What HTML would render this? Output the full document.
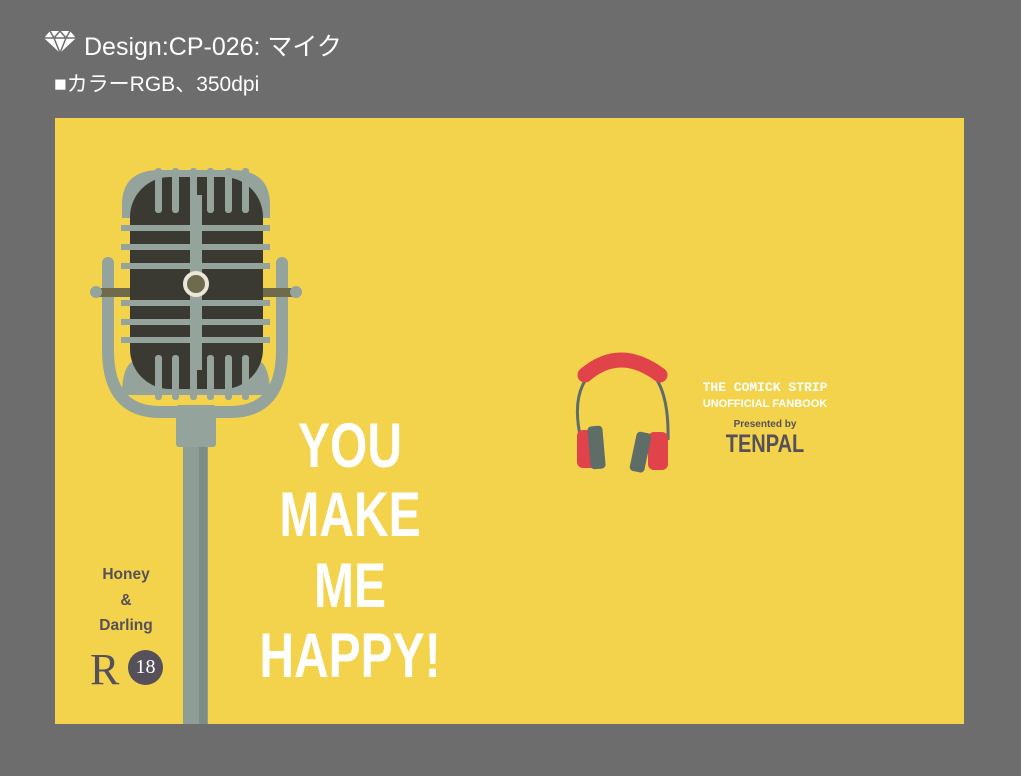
<!DOCTYPE html>
<html><head><meta charset="utf-8"><style>
body{margin:0;width:1021px;height:776px;background:#6d6d6d;position:relative;overflow:hidden;font-family:"Liberation Sans","Noto Sans CJK JP",sans-serif}
.t1{position:absolute;left:84px;top:27px;color:#fff;font-size:25px}
.t2{position:absolute;left:54px;top:68px;color:#fff;font-size:21px}
.panel{position:absolute;left:55px;top:118px;width:909px;height:606px;background:#f3d24c}
.big{position:absolute;color:#fff;font-weight:bold;text-align:center;width:300px;left:200px;font-size:60px;transform:scale(0.8,1.05);line-height:70px}
.hd{position:absolute;color:#55505a;font-weight:bold;font-size:15.5px;text-align:center;width:100px;left:76px}
</style></head><body>
<svg style="position:absolute;left:43px;top:30px" width="34" height="24" viewBox="0 0 34 24"><path d="M7 1H27L33 8L17 23L1 8Z" fill="#fff"/><path d="M1 8H33M7 1L11 8L17 23M27 1L23 8L17 23M11 8L17 1L23 8" stroke="#6d6d6d" stroke-width="1.5" fill="none"/></svg>
<div class="t1">Design:CP-026: マイク</div>
<div class="t2">■カラーRGB、350dpi</div>
<div class="panel"></div>
<svg style="position:absolute;left:0;top:0" width="1021" height="776">
<rect x="183" y="440" width="25" height="284" fill="#8e9d95"/>
<rect x="199" y="440" width="8" height="284" fill="#7d8c85"/>
<path d="M108 263V350Q108 412 160 412H230Q282 412 282 350V263" stroke="#94a39b" stroke-width="12" fill="none" stroke-linecap="round"/>
<rect x="176" y="405" width="40" height="42" rx="3" fill="#94a39b"/>
<rect x="96" y="288" width="200" height="9" fill="#6f6a4c"/>
<circle cx="96" cy="292" r="6" fill="#94a39b"/><circle cx="296" cy="292" r="6" fill="#94a39b"/>
<path d="M122 205Q122 170 160 170H232Q270 170 270 205V218H122Z" fill="#94a39b"/>
<path d="M122 395Q122 365 135 360H258Q270 365 270 395Z" fill="#94a39b"/>
<rect x="130" y="177" width="133" height="212" rx="40" fill="#3b3a32"/>
<g fill="#94a39b">
<rect x="155" y="168" width="7" height="45" rx="3"/><rect x="172" y="168" width="7" height="45" rx="3"/><rect x="190" y="168" width="7" height="45" rx="3"/><rect x="207" y="168" width="7" height="45" rx="3"/><rect x="225" y="168" width="7" height="45" rx="3"/><rect x="242" y="168" width="7" height="45" rx="3"/>
<rect x="155" y="355" width="7" height="45" rx="3"/><rect x="172" y="355" width="7" height="45" rx="3"/><rect x="190" y="355" width="7" height="45" rx="3"/><rect x="207" y="355" width="7" height="45" rx="3"/><rect x="225" y="355" width="7" height="45" rx="3"/><rect x="242" y="355" width="7" height="45" rx="3"/>
<rect x="121" y="225" width="149" height="6"/><rect x="121" y="244" width="149" height="6"/><rect x="121" y="263" width="149" height="6"/><rect x="121" y="300" width="149" height="6"/><rect x="121" y="319" width="149" height="6"/><rect x="121" y="337" width="149" height="6"/>
<rect x="190" y="195" width="12" height="175"/>
</g>
<circle cx="196" cy="284" r="11" fill="#6e6a50" stroke="#ece6d4" stroke-width="4"/>
<path d="M581 440Q565 370 620 360Q670 360 668 440" stroke="#5e6d68" stroke-width="3" fill="none"/>
<path d="M585 375Q620 345 660 375" stroke="#e0434a" stroke-width="15" fill="none" stroke-linecap="round"/>
<rect x="577" y="430" width="20" height="38" rx="6" fill="#e0434a"/>
<rect x="589" y="426" width="15" height="43" rx="4" fill="#5e6d68" transform="rotate(-5 596 447)"/>
<rect x="648" y="432" width="20" height="38" rx="6" fill="#e0434a"/>
<rect x="633" y="432" width="15" height="40" rx="4" fill="#5e6d68" transform="rotate(12 640 452)"/>
</svg>
<div class="big" style="top:411px">YOU</div>
<div class="big" style="top:480px">MAKE</div>
<div class="big" style="top:551px">ME</div>
<div class="big" style="top:621px">HAPPY!</div>
<div class="hd" style="top:566px">Honey</div>
<div class="hd" style="top:592px">&amp;</div>
<div class="hd" style="top:617px">Darling</div>
<div style="position:absolute;left:90px;top:644px;font-family:'Liberation Serif',serif;font-size:44px;color:#55505a">R</div>
<div style="position:absolute;left:128px;top:650px;width:35px;height:35px;border-radius:50%;background:#55505a;color:#fff;font-family:'Liberation Serif',serif;font-size:20px;text-align:center;line-height:35px">18</div>
<div style="position:absolute;left:680px;top:380px;width:170px;text-align:center;color:#fff;font-family:'Liberation Mono',monospace;font-weight:bold;font-size:13px">THE COMICK STRIP</div>
<div style="position:absolute;left:680px;top:398px;width:170px;text-align:center;color:#fff;font-size:11px;font-weight:bold">UNOFFICIAL FANBOOK</div>
<div style="position:absolute;left:680px;top:419px;width:170px;text-align:center;color:#55505a;font-size:10px;font-weight:bold">Presented by</div>
<div style="position:absolute;left:680px;top:430px;width:170px;text-align:center;color:#55505a;font-size:25px;font-weight:bold;transform:scaleX(0.8)">TENPAL</div>
</body></html>
